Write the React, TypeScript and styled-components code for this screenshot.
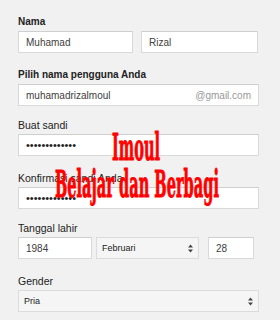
import styled, { createGlobalStyle } from 'styled-components';

const GlobalStyle = createGlobalStyle`
  html, body {
    margin: 0;
    padding: 0;
    background: #f1f1f1;
  }
  body {
    font-family: 'Liberation Sans', Arial, sans-serif;
  }
`;

const Page = styled.div`
  position: relative;
  width: 280px;
  height: 320px;
  overflow: hidden;
  background: #f1f1f1;
  padding: 15px 0 0 18px;
  box-sizing: border-box;
`;

const Form = styled.div`
  width: 241px;
`;

const Field = styled.div<{ $mb: number }>`
  margin-bottom: ${(p) => p.$mb}px;
`;

const Label = styled.label<{ $bold?: boolean }>`
  display: block;
  font-size: ${(p) => (p.$bold ? '10px' : '10.5px')};
  font-weight: ${(p) => (p.$bold ? 700 : 400)};
  line-height: 14px;
  color: #222;
  margin-bottom: 2px;
`;

const Row = styled.div`
  display: flex;
`;

const Box = styled.div<{ $w?: number; $ml?: number }>`
  position: relative;
  display: flex;
  align-items: center;
  width: ${(p) => (p.$w ? `${p.$w}px` : '100%')};
  margin-left: ${(p) => p.$ml ?? 0}px;
  height: 22px;
  box-sizing: border-box;
  background: #fff;
  border: 1px solid #d9d9d9;
  border-top-color: #cfcfcf;
  padding: 0 7px;
`;

const Input = styled.input`
  flex: 1;
  min-width: 0;
  border: none;
  outline: none;
  background: transparent;
  padding: 0;
  font-family: 'Liberation Sans', Arial, sans-serif;
  font-size: 10px;
  color: #404040;
`;

const Password = styled(Input)`
  font-size: 11px;
  color: #222;
`;

const Suffix = styled.span`
  font-size: 10px;
  color: #999;
`;

const Select = styled.div<{ $w?: number; $ml?: number }>`
  display: flex;
  align-items: center;
  justify-content: space-between;
  width: ${(p) => (p.$w ? `${p.$w}px` : '100%')};
  margin-left: ${(p) => p.$ml ?? 0}px;
  height: 22px;
  box-sizing: border-box;
  background: #f5f5f5;
  border: 1px solid #dcdcdc;
  padding: 0 5px 0 5px;
  font-size: 9px;
  color: #222;
`;

const Arrows = () => (
  <svg width="5" height="9" viewBox="0 0 5 9">
    <path d="M2.5 0.5 L5 3.5 L0 3.5 Z" fill="#444" />
    <path d="M2.5 8.5 L5 5.5 L0 5.5 Z" fill="#444" />
  </svg>
);

const Watermark = styled.div<{ $top: number; $left: number }>`
  position: absolute;
  top: ${(p) => p.$top}px;
  left: ${(p) => p.$left}px;
  font-family: 'DejaVu Serif Condensed', 'DejaVu Serif', serif;
  font-stretch: condensed;
  font-weight: 700;
  font-size: 20px;
  line-height: 1;
  color: #ff0000;
  -webkit-text-stroke: 0.5px #ff0000;
  white-space: nowrap;
  transform: scale(0.81, 1.85);
  transform-origin: top left;
  pointer-events: none;
`;

export default function App() {
  return (
    <>
      <GlobalStyle />
      <Page>
        <Form>
          <Field $mb={15}>
            <Label $bold>Nama</Label>
            <Row>
              <Box $w={115}>
                <Input readOnly defaultValue="Muhamad" />
              </Box>
              <Box $w={117} $ml={8}>
                <Input readOnly defaultValue="Rizal" />
              </Box>
            </Row>
          </Field>
          <Field $mb={12}>
            <Label $bold>Pilih nama pengguna Anda</Label>
            <Box>
              <Input readOnly defaultValue="muhamadrizalmoul" />
              <Suffix>@gmail.com</Suffix>
            </Box>
          </Field>
          <Field $mb={15}>
            <Label>Buat sandi</Label>
            <Box>
              <Password type="password" readOnly defaultValue="rahasiaimoul1" />
            </Box>
          </Field>
          <Field $mb={12}>
            <Label>Konfirmasi sandi Anda</Label>
            <Box>
              <Password type="password" readOnly defaultValue="rahasiaimoul1" />
            </Box>
          </Field>
          <Field $mb={15}>
            <Label>Tanggal lahir</Label>
            <Row>
              <Box $w={74}>
                <Input readOnly defaultValue="1984" />
              </Box>
              <Select $w={103} $ml={4}>
                <span>Februari</span>
                <Arrows />
              </Select>
              <Box $w={46} $ml={9}>
                <Input readOnly defaultValue="28" />
              </Box>
            </Row>
          </Field>
          <Field $mb={0}>
            <Label>Gender</Label>
            <Select>
              <span>Pria</span>
              <Arrows />
            </Select>
          </Field>
        </Form>
        <Watermark $top={129} $left={112}>Imoul</Watermark>
        <Watermark $top={166} $left={55}>Belajar dan Berbagi</Watermark>
      </Page>
    </>
  );
}
